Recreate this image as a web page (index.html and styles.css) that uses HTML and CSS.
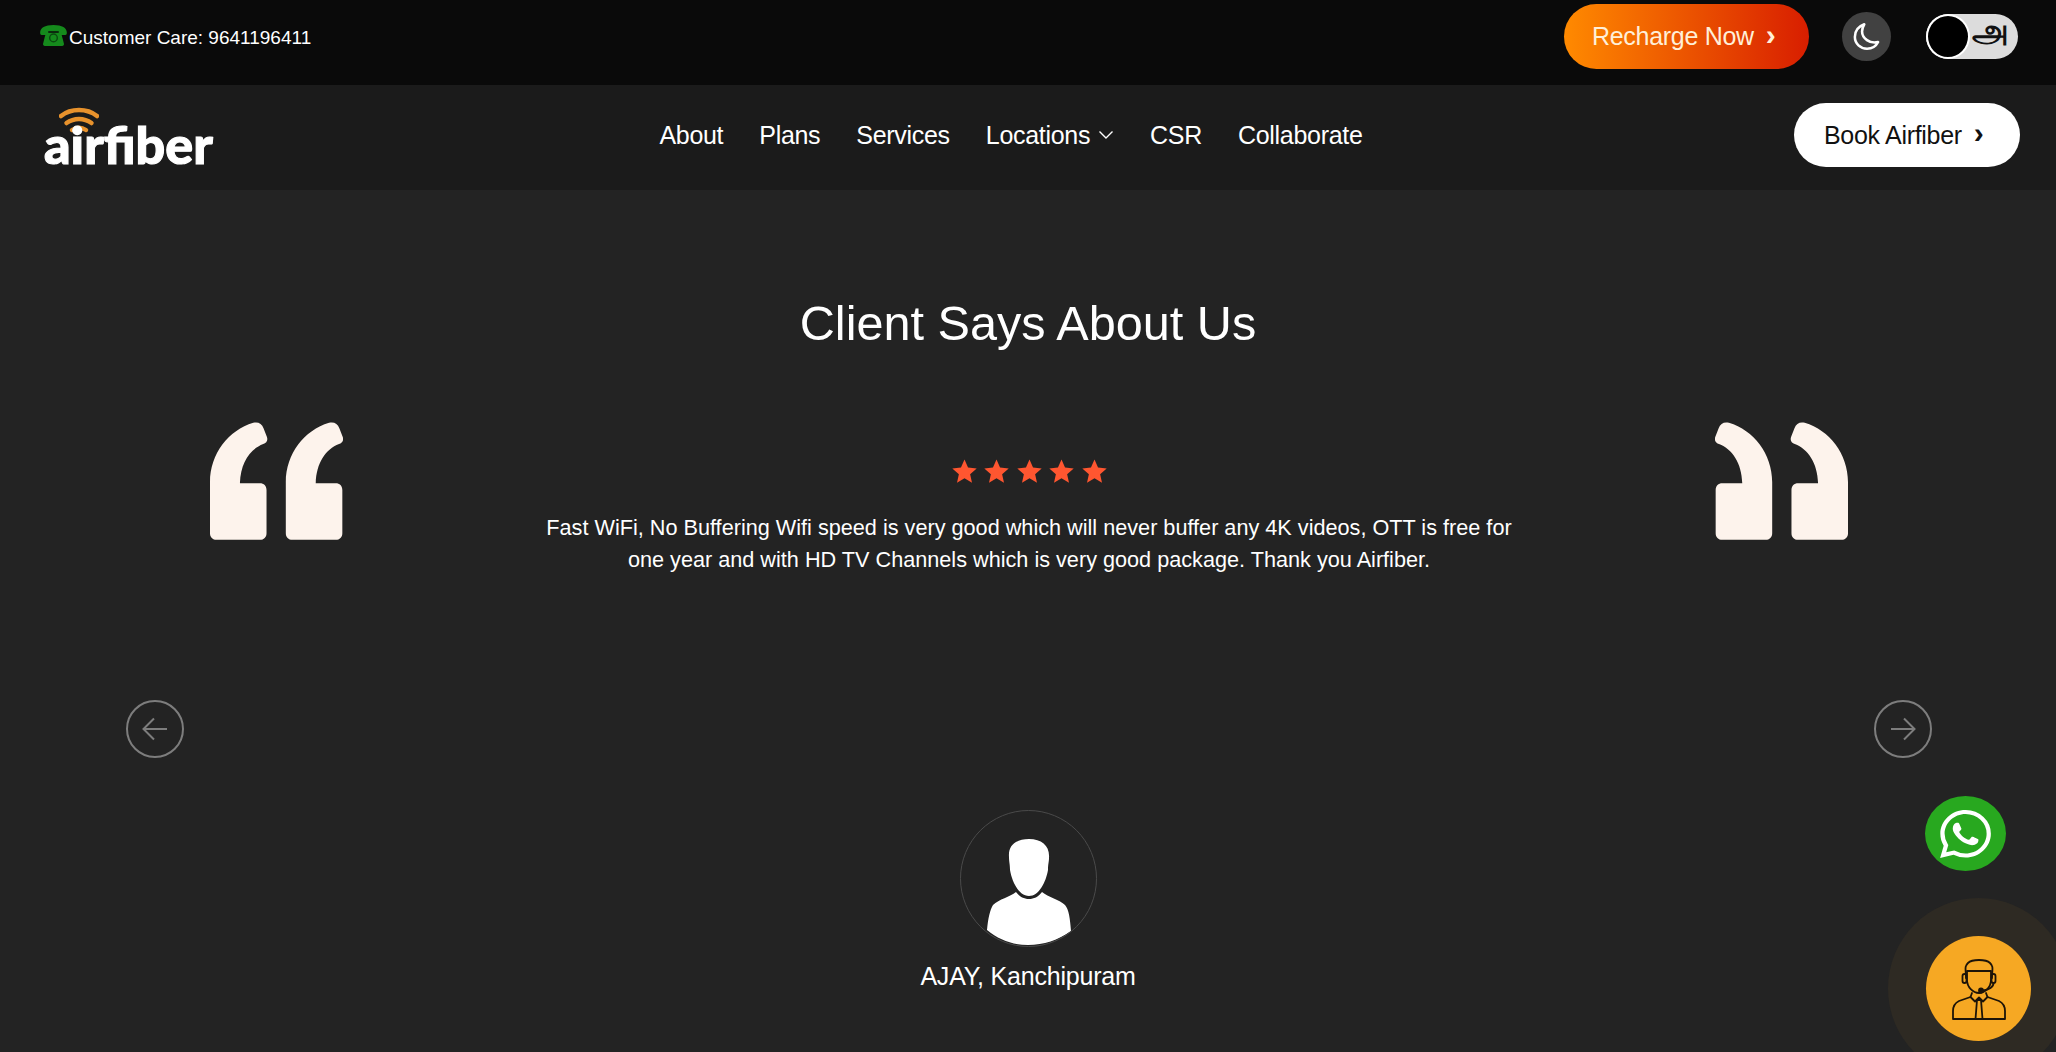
FILE: index.html
```html
<!DOCTYPE html>
<html lang="en">
<head>
  <meta charset="UTF-8">
  <meta name="viewport" content="width=device-width, initial-scale=1.0">
  <title>Airfiber</title>
  <link rel="stylesheet" href="styles.css">
</head>
<body>
  <svg class="defs" width="0" height="0" aria-hidden="true">
    <defs>
      <path id="quoteMark" d="M0 180C0 96 56 24 130 2C144-2 156 4 161 18L171 44C175 55 170 62 160 66C120 82 92 122 90 184L150 184C162 184 170 192 170 204L170 334C170 346 162 354 150 354L20 354C8 354 0 346 0 334Z"/>
      <polygon id="star" points="12,0.5 15.4,8.2 23.7,9 17.4,14.6 19.2,22.8 12,18.5 4.8,22.8 6.6,14.6 0.3,9 8.6,8.2"/>
    </defs>
  </svg>

  <div class="topbar">
    <div class="care">
      <svg class="care-icon" viewBox="0 0 28 22">
        <path d="M0 8C0 3 5 0 14 0S28 3 28 8C28 10 27 10.500 25 10.500L21.500 10.500C20 10.500 19.500 9.500 19.500 8V6.500H8.500V8C8.500 9.500 8 10.500 6.500 10.500L3 10.500C1 10.500 0 10 0 8Z" fill="#158a1c"/>
        <path d="M6 8H22L25 20C25 21 24.500 22 23 22H5C3.500 22 3 21 3 20Z" fill="#158a1c"/>
        <circle cx="14" cy="13.500" r="4" fill="none" stroke="#0b4a10" stroke-width="1.500"/>
      </svg>
      <span>Customer Care: 9641196411</span>
    </div>
    <div class="top-actions">
      <a class="btn btn-recharge" href="#">Recharge Now <span class="btn-arrow">›</span></a>
      <span class="moon">
        <svg viewBox="0 0 28 28" width="31" height="31">
          <path d="M12 3C6.500 5 3.500 9.500 3.500 14.500C3.500 20.500 8.500 25 14.500 25C19 25 22.500 23 24.500 19C17 21 10 15.500 10 9.500C10 7 10.800 5 12 3Z" fill="none" stroke="#fff" stroke-width="2.300" stroke-linejoin="round"/>
        </svg>
      </span>
      <span class="lang-toggle">
        <span class="lang-knob"></span>
        <span class="lang-letter" lang="ta">அ</span>
      </span>
    </div>
  </div>

  <nav class="navbar">
    <a class="logo" href="#">
      <svg class="logo-wifi" viewBox="0 0 40 28">
        <path d="M2 9C12 1 28 1 38 9" fill="none" stroke="#e8922c" stroke-width="4.500" stroke-linecap="round"/>
        <path d="M7.500 16C15 10.500 25 10.500 32.500 16" fill="none" stroke="#e8922c" stroke-width="4.500" stroke-linecap="round"/>
        <path d="M13 23C17.500 20 22.500 20 27 23" fill="none" stroke="#e8922c" stroke-width="4.500" stroke-linecap="round"/>
      </svg>
      <span class="logo-text">airfiber</span>
    </a>
    <ul class="nav-links">
      <li>About</li>
      <li>Plans</li>
      <li>Services</li>
      <li class="has-caret">Locations
        <svg viewBox="0 0 16 10" width="16" height="10"><path d="M1.500 1.500L8 8L14.500 1.500" fill="none" stroke="#fff" stroke-width="1.400"/></svg>
      </li>
      <li>CSR</li>
      <li>Collaborate</li>
    </ul>
    <a class="btn btn-book" href="#">Book Airfiber <span class="btn-arrow">›</span></a>
  </nav>

  <main class="testimonials">
    <h1 class="title">Client Says About Us</h1>

    <div class="slide">
      <svg class="quote" viewBox="0 0 400 354"><use href="#quoteMark"/><use href="#quoteMark" x="228"/></svg>
      <div class="slide-body">
        <div class="stars">
          <svg viewBox="0 0 24 24"><use href="#star"/></svg>
          <svg viewBox="0 0 24 24"><use href="#star"/></svg>
          <svg viewBox="0 0 24 24"><use href="#star"/></svg>
          <svg viewBox="0 0 24 24"><use href="#star"/></svg>
          <svg viewBox="0 0 24 24"><use href="#star"/></svg>
        </div>
        <p class="review">Fast WiFi, No Buffering Wifi speed is very good which will never buffer any 4K videos, OTT is free for one year and with HD TV Channels which is very good package. Thank you Airfiber.</p>
      </div>
      <svg class="quote quote-right" viewBox="0 0 400 354"><use href="#quoteMark"/><use href="#quoteMark" x="228"/></svg>
    </div>

    <button class="arrow arrow-prev" aria-label="Previous">
      <svg viewBox="0 0 30 30" width="30" height="30"><path d="M27 15H4M14 4.500L3.500 15L14 25.500" fill="none" stroke="#7d7d7d" stroke-width="2"/></svg>
    </button>
    <button class="arrow arrow-next" aria-label="Next">
      <svg viewBox="0 0 30 30" width="30" height="30"><path d="M3 15H26M16 4.500L26.500 15L16 25.500" fill="none" stroke="#7d7d7d" stroke-width="2"/></svg>
    </button>

    <div class="client">
      <span class="avatar">
        <svg viewBox="0 0 137 137" width="137" height="137">
          <path d="M49 47C48 35 56 29 69 29C82 29 90 36 89 48C89 52 88 54 88 60C86 72 79 86 69 86C59 86 52 72 50 60C50 54 49 52 49 47Z" fill="#fff"/>
          <path d="M56 82C60 87 64 89 69 89C74 89 78 87 82 82C88 87 100 90 105 95C109 100 110 108 111 121C98 130 84 135 68 135C53 135 39 130 27 120C28 108 30 100 33 95C39 89 50 87 56 82Z" fill="#fff"/>
        </svg>
      </span>
      <div class="client-name">AJAY, Kanchipuram</div>
    </div>
  </main>

  <a class="float-whatsapp" href="#" aria-label="WhatsApp">
    <svg viewBox="0 0 24 24" width="51" height="48" preserveAspectRatio="none"><path fill="#fff" d="M17.472 14.382c-.297-.149-1.758-.867-2.03-.967-.273-.099-.471-.148-.67.15-.197.297-.767.966-.94 1.164-.173.199-.347.223-.644.075-.297-.15-1.255-.463-2.39-1.475-.883-.788-1.48-1.761-1.653-2.059-.173-.297-.018-.458.13-.606.134-.133.298-.347.446-.52.149-.174.198-.298.298-.497.099-.198.05-.371-.025-.52-.075-.149-.669-1.612-.916-2.207-.242-.579-.487-.5-.669-.51-.173-.008-.371-.01-.57-.01-.198 0-.52.074-.792.372-.272.297-1.04 1.016-1.04 2.479 0 1.462 1.065 2.875 1.213 3.074.149.198 2.096 3.2 5.077 4.487.709.306 1.262.489 1.694.625.712.227 1.36.195 1.871.118.571-.085 1.758-.719 2.006-1.413.248-.694.248-1.289.173-1.413-.074-.124-.272-.198-.57-.347m-5.421 7.403h-.004a9.87 9.87 0 01-5.031-1.378l-.361-.214-3.741.982.998-3.648-.235-.374a9.86 9.86 0 01-1.51-5.26c.001-5.45 4.436-9.884 9.888-9.884 2.64 0 5.122 1.03 6.988 2.898a9.825 9.825 0 012.893 6.994c-.003 5.45-4.437 9.884-9.885 9.884m8.413-18.297A11.815 11.815 0 0012.05 0C5.495 0 .16 5.335.157 11.892c0 2.096.547 4.142 1.588 5.945L.057 24l6.305-1.654a11.882 11.882 0 005.683 1.448h.005c6.554 0 11.89-5.335 11.893-11.893a11.821 11.821 0 00-3.48-8.413Z"/></svg>
  </a>
  <a class="float-support" href="#" aria-label="Support">
    <svg viewBox="0 0 54 62" width="54" height="62" fill="none" stroke="#1d1408" stroke-width="1.800" stroke-linejoin="round" stroke-linecap="round">
      <path d="M14 20C14 11 12 9 16 5C20 1 34 1 38 5C42 9 40 11 40 20"/>
      <path d="M15 13C22 13 32 13 39 13"/>
      <path d="M15 14V22C15 29 21 35 27 35C33 35 39 29 39 22V14"/>
      <rect x="10.500" y="16" width="4" height="9" rx="2"/>
      <rect x="39.500" y="16" width="4" height="9" rx="2"/>
      <path d="M41.500 25C41.500 29 37 32 31 32.500"/>
      <circle cx="29" cy="32.500" r="2" fill="#1d1408"/>
      <path d="M20 35L18.500 39L23 43.500L27 39.500L31 43.500L35.500 39L34 35"/>
      <path d="M18.500 39L7 43C3 45 1 48 1 53V61H53V53C53 48 51 45 47 43L35.500 39"/>
      <path d="M25 42L23.500 61M29 42L30.500 61M25 42H29"/>
    </svg>
  </a>
</body>
</html>
```
FILE: styles.css
```css
* {
  box-sizing: border-box;
}
html, body {
  margin: 0;
  padding: 0;
}
body {
  font-family: "Liberation Sans", Arial, sans-serif;
  background-color: #232323;
  color: #fff;
  height: 100vh;
  overflow: hidden;
}
a {
  text-decoration: none;
}
.defs {
  display: block;
  height: 0;
}

/* top strip */
.topbar {
  height: 85px;
  background-color: #0a0a0a;
  display: flex;
  align-items: center;
  justify-content: space-between;
  padding: 0 38px 0 40px;
}
.care {
  display: flex;
  align-items: center;
  gap: 2px;
  font-size: 19px;
  margin-top: -9px;
}
.care-icon {
  width: 27px;
  height: 21px;
  margin-top: -5px;
}
.top-actions {
  display: flex;
  align-items: center;
  margin-top: -12px;
}
.btn {
  display: flex;
  align-items: center;
  gap: 12px;
  height: 65px;
  border-radius: 33px;
  font-size: 25px;
  letter-spacing: -0.3px;
}
.btn-arrow {
  font-size: 30px;
  font-weight: 700;
  line-height: 1;
  margin-top: -4px;
}
.btn-recharge {
  width: 245px;
  padding-left: 28px;
  color: #ffefd8;
  background: linear-gradient(90deg, #ff8a00, #d81e00);
  margin-right: 33px;
}
.moon {
  width: 49px;
  height: 49px;
  border-radius: 50%;
  background-color: #414141;
  display: flex;
  align-items: center;
  justify-content: center;
  margin-right: 35px;
}
.lang-toggle {
  width: 92px;
  height: 45px;
  border-radius: 23px;
  background-color: #dcdcdc;
  display: flex;
  align-items: center;
  justify-content: space-between;
  padding-right: 9px;
}
.lang-knob {
  width: 44px;
  height: 45px;
  border-radius: 50%;
  background-color: #000;
  border: 2px solid #fff;
}
.lang-letter {
  font-family: "Noto Sans", "DejaVu Sans", sans-serif;
  font-size: 33px;
  font-weight: 700;
  line-height: 36px;
  margin-top: -14px;
  color: #111;
}

/* main nav */
.navbar {
  height: 105px;
  background-color: #1b1b1b;
  display: flex;
  align-items: center;
  justify-content: space-between;
  padding: 0 36px 5px 44px;
}
.logo {
  display: flex;
  flex-direction: column;
  width: 184px;
  color: #fff;
}
.logo-wifi {
  width: 40px;
  height: 28px;
  margin: 3px 0 -14px 15px;
}
.logo-text {
  font-family: "Lato", sans-serif;
  font-weight: 900;
  font-size: 52px;
  line-height: 46px;
  -webkit-text-stroke: 1.1px #fff;
}
.nav-links {
  display: flex;
  align-items: center;
  gap: 36px;
  list-style: none;
  margin: 0;
  padding: 0;
  font-size: 25px;
  letter-spacing: -0.3px;
}
.has-caret {
  display: flex;
  align-items: center;
  gap: 8px;
}
.btn-book {
  width: 226px;
  height: 64px;
  padding-left: 30px;
  color: #111;
  background-color: #fff;
}

/* testimonial slider */
.testimonials {
  position: relative;
  text-align: center;
  padding-top: 106px;
}
.title {
  margin: 0 0 71px;
  font-size: 48.600px;
  line-height: 55px;
  font-weight: 400;
}
.slide {
  display: flex;
  justify-content: space-between;
  padding: 0 208px 0 210px;
  min-height: 157px;
}
.quote {
  width: 133px;
  height: 118px;
  fill: #fdf3ec;
}
.quote-right {
  transform: scaleX(-1);
}
.slide-body {
  width: 990px;
  padding-top: 37px;
}
.stars {
  display: flex;
  justify-content: center;
  gap: 7.500px;
  margin-bottom: 28px;
}
.stars svg {
  width: 25px;
  height: 25px;
  fill: #ff5630;
}
.review {
  margin: 0;
  font-size: 21.670px;
  line-height: 32px;
}
.arrow {
  position: absolute;
  top: 510px;
  width: 58px;
  height: 58px;
  border-radius: 50%;
  border: 2px solid #7d7d7d;
  background: transparent;
  padding: 0;
  display: flex;
  align-items: center;
  justify-content: center;
}
.arrow-prev {
  left: 126px;
}
.arrow-next {
  right: 124px;
}
.client {
  margin-top: 231px;
  display: flex;
  flex-direction: column;
  align-items: center;
}
.avatar {
  width: 137px;
  height: 137px;
  border-radius: 50%;
  border: 1px solid #4a4a4a;
  overflow: hidden;
  display: block;
}
.avatar svg {
  display: block;
  margin: -1px;
}
.client-name {
  margin-top: 14px;
  font-size: 25px;
  line-height: 30px;
  letter-spacing: -0.2px;
}

/* floating buttons */
.float-whatsapp {
  position: fixed;
  left: 1925px;
  top: 796px;
  width: 81px;
  height: 75px;
  border-radius: 50%;
  background-color: #28a81f;
  display: flex;
  align-items: center;
  justify-content: center;
}
.float-support {
  position: fixed;
  left: 1926px;
  top: 936px;
  width: 105px;
  height: 105px;
  border-radius: 50%;
  background-color: #f6a823;
  box-shadow: 0 0 0 38px #2e2a23;
  display: flex;
  align-items: center;
  justify-content: center;
}
```
